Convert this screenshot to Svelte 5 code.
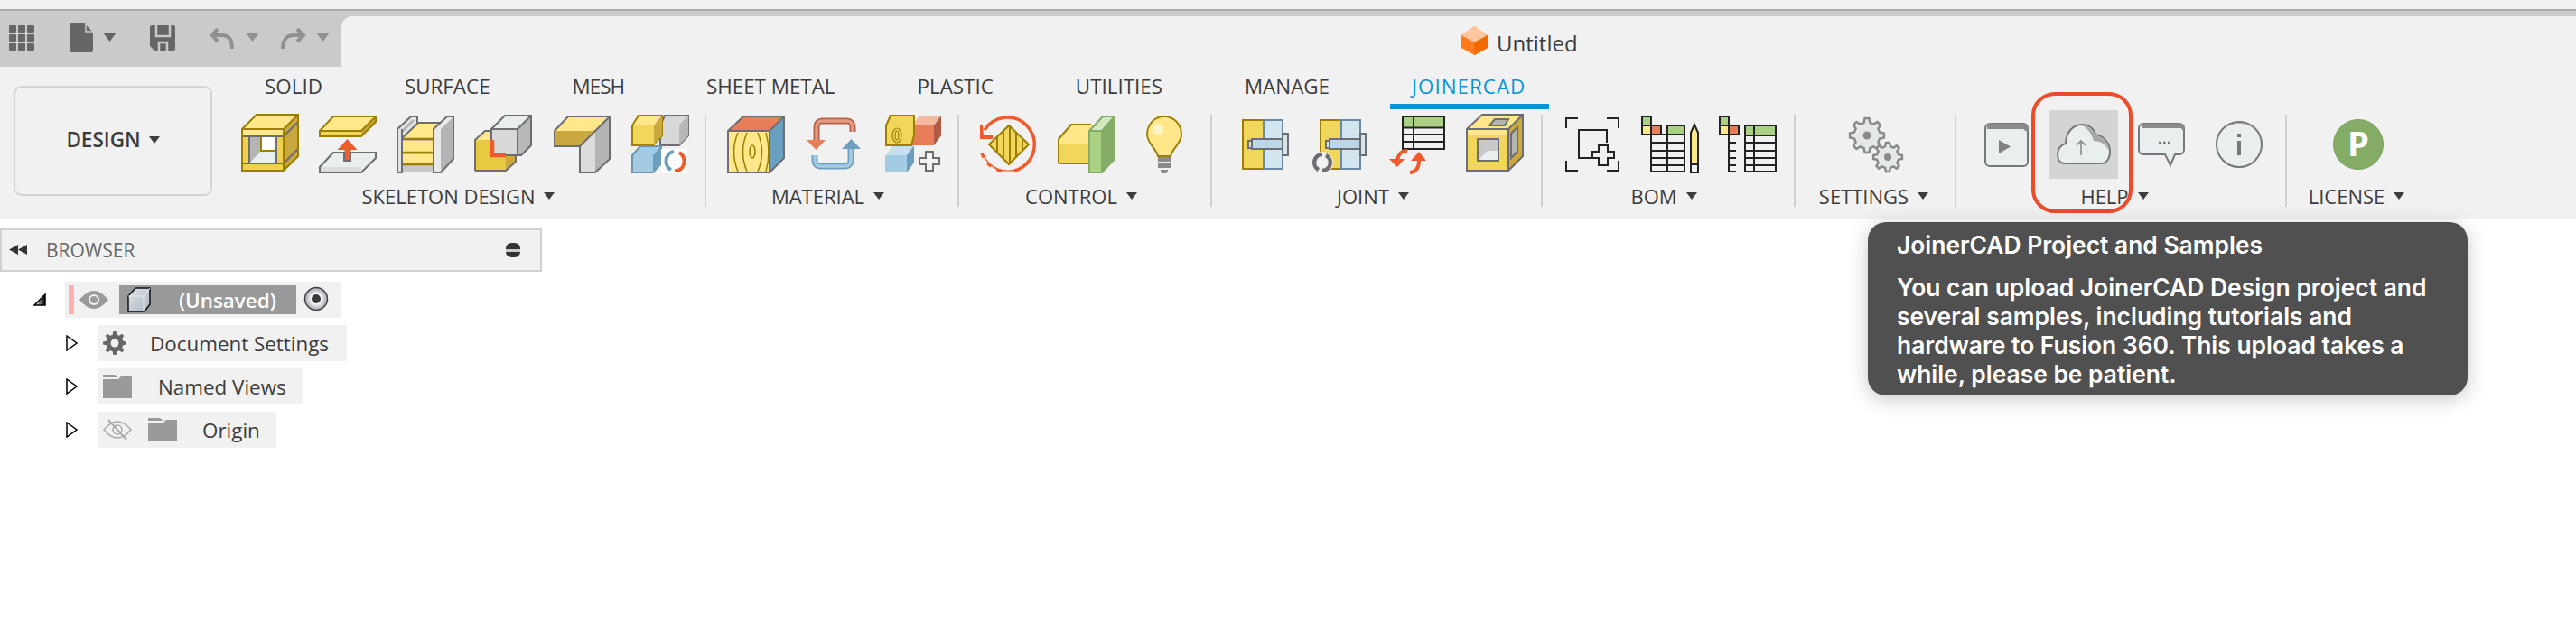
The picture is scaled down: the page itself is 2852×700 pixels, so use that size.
<script>
  const tabs = ['SOLID','SURFACE','MESH','SHEET METAL','PLASTIC','UTILITIES','MANAGE','JOINERCAD'];
  function gear(cx, cy, r, teeth = 8, inner = 0.76) {
    const pts = [];
    for (let i = 0; i < teeth; i++) {
      const a = (i / teeth) * Math.PI * 2;
      const w = Math.PI / teeth;
      [[-0.62, inner], [-0.32, 1], [0.32, 1], [0.62, inner]].forEach(([o, k]) => {
        pts.push((cx + Math.cos(a + o * w) * r * k).toFixed(1) + ',' + (cy + Math.sin(a + o * w) * r * k).toFixed(1));
      });
    }
    return pts.join(' ');
  }
</script>

<div class="page">
  <div class="topline"></div>
  <div class="strip"></div>
  <div class="head">
    <div class="qat">
      <svg width="378" height="56" viewBox="0 18 378 56">
        <g fill="#666">
          {#each [0,1,2] as r}{#each [0,1,2] as c}
            <rect x={10 + c*10} y={28 + r*10} width="8" height="8" rx="1"/>
          {/each}{/each}
          <path d="M79 26h15l9 10v20a2 2 0 0 1-2 2H79a2 2 0 0 1-2-2V28a2 2 0 0 1 2-2z"/>
          <path d="M114 36h15l-7.500 10z"/>
          <path d="M168 28h24a2 2 0 0 1 2 2v24a2 2 0 0 1-2 2h-21l-5-5V30a2 2 0 0 1 2-2z"/>
        </g>
        <path d="M95 26v9h8" fill="none" stroke="#cacaca" stroke-width="1.500"/>
        <path d="M173 28v12h15V28M176 56v-9h9v9" fill="none" stroke="#cacaca" stroke-width="2.500"/>
        <g fill="none" stroke="#909090" stroke-width="4">
          <path d="M241 32l-6 7 6 7"/><path d="M235 39h11c7 0 11 5 11 15"/>
          <path d="M329 32l7 7-7 7"/><path d="M335 39h-10c-7 0-12 5-12 15"/>
        </g>
        <path d="M272 36h15l-7.500 10zM350 36h15l-7.500 10z" fill="#909090"/>
      </svg>
    </div>
    <div class="title">
      <svg width="30" height="34" viewBox="1618 31 30 34">
        <path d="M1632.500 32l14.500 10v14l-14.500 8-14.500-8V42z" fill="#ff7a1a"/>
        <path d="M1632.500 32l14.500 10-14.500 8-14.500-8z" fill="#ffc7a1"/>
        <path d="M1632.500 50l14.500-8v14l-14.500 8z" fill="#f26a00"/>
      </svg>
      <span>Untitled</span>
    </div>
  </div>

  <div class="ribbon">
    <div class="design"><span>DESIGN</span><i class="caret"></i></div>
    <div class="main">
      <div class="tabs">
        {#each tabs as t, i}
          <div class="tab" class:active={i === tabs.length - 1} class:narrow={t === 'MESH'}>{t}</div>
        {/each}
      </div>
      <div class="panels">
        <section class="panel p1">
          <div class="icons">
            <svg width="64" height="76" viewBox="266 122 64 76">
              <path d="M267 143l16-16h46l-16 16z" fill="#ffe78a"/>
              <path d="M313 143l16-16v46l-16 16z" fill="#c9a83e"/>
              <rect x="267" y="143" width="46" height="46" fill="#efd14e"/>
              <rect x="267" y="143" width="46" height="8" fill="#ffe78a"/>
              <rect x="275" y="151" width="30" height="30" fill="#e9eeef"/>
              <path d="M275 151h13v16l-13 14z" fill="#b4b4b4"/>
              <rect x="288" y="151" width="17" height="16" fill="#fff" stroke="#9c7f00" stroke-width="2"/>
              <path d="M267 151h46M267 181h46M275 151v30M305 151v30M313 151l16-16M313 181l16-16" stroke="#6e6e72" stroke-width="2" fill="none"/>
              <path d="M267 143l16-16h46v46l-16 16H267zM267 143h46v46M313 143l16-16" fill="none" stroke="#9c7f00" stroke-width="2"/>
            </svg>
            <svg width="64" height="76" viewBox="352 122 64 76">
              <path d="M353 145l15-16h47l-16 16z" fill="#ffe78a"/>
              <path d="M353 145h46v6h-46z" fill="#f0d75c"/>
              <path d="M399 151v-6l16-16v6z" fill="#c9a83e"/>
              <path d="M353 151v-6l15-16h47v6l-16 16zM353 145h46l16-16" fill="none" stroke="#9c7f00" stroke-width="2"/>
              <path d="M383.500 154l11 12h-7v12h-7v-12h-8z" fill="#f15a2b"/>
              <path d="M353 191v-6l15-16h12v9h7v-9h28v6l-16 16z" fill="#e9eeef" stroke="#6e6e72" stroke-width="2"/>
              <path d="M354 185h45v5h-45z" fill="#dcdcdc"/>
            </svg>
            <svg width="64" height="76" viewBox="438 122 64 76">
              <path d="M444 143h36v48h-36z" fill="#c8c8c8"/>
              <path d="M461 136h33v8h-33z" fill="#f1f1f1"/>
              <path d="M444 153l17-16h30l-12 16z" fill="#ffe78a"/>
              <rect x="444" y="156" width="35" height="12" fill="#ffe78a"/>
              <rect x="444" y="171" width="35" height="10" fill="#ffe78a"/>
              <path d="M444 154h35M444 169h35M444 182h35" stroke="#9c7f00" stroke-width="2.500"/>
              <path d="M461 136h32" stroke="#6e6e72" stroke-width="2"/>
              <path d="M439 143l15-14h7v8l-17 16v38h-5z" fill="#e4e4e4" stroke="#6e6e72" stroke-width="2"/>
              <path d="M444 146l13-13" stroke="#b4b4b4" stroke-width="3"/>
              <path d="M444 143v48" stroke="#6e6e72" stroke-width="2"/>
              <path d="M487 143l14-14v47l-14 15z" fill="#b4b4b4"/>
              <path d="M479 143l15-14h7l-14 14z" fill="#e9e9e9"/>
              <rect x="479" y="143" width="8" height="48" fill="#e9e9e9"/>
              <path d="M479 191v-48l15-14h7v47l-14 15z" fill="none" stroke="#6e6e72" stroke-width="2"/>
            </svg>
            <svg width="66" height="76" viewBox="524 122 66 76">
              <path d="M559 155l11-10v34l-11 10z" fill="#c9a83e"/>
              <path d="M525 155l11-10h34l-11 10z" fill="#ffe78a"/>
              <rect x="525" y="155" width="34" height="34" fill="#e8ca42"/>
              <path d="M525 189v-34l11-10h8M525 189h34l11-10v-6" fill="none" stroke="#6e6e72" stroke-width="2"/>
              <path d="M543 143l15-15h29v33l-11 11h-33z" fill="#d8d8d8"/>
              <path d="M543 143l15-15h29l-15 15z" fill="#e9eeef"/>
              <path d="M572 143l15-15v33l-11 11h-4z" fill="#b8b8b8"/>
              <path d="M543 172v-29l15-15h29v33l-11 11zM543 143h29v29M572 143l15-15" fill="none" stroke="#6e6e72" stroke-width="2"/>
              <path d="M544 155v17h15" fill="none" stroke="#f15a2b" stroke-width="4.500"/>
            </svg>
            <svg width="64" height="76" viewBox="612 122 64 76">
              <path d="M613 145l15-16h46l-16 16z" fill="#ffe78a"/>
              <path d="M613 145h45l-17 17h-28z" fill="#c9a83e"/>
              <path d="M641 162l17-17v46h-17z" fill="#dcdcdc"/>
              <path d="M658 145l16-16v47l-16 15z" fill="#b4b4b4"/>
              <path d="M613 162v-17l15-16h46v47l-16 15h-17v-29zM674 129l-33 33" fill="none" stroke="#6e6e72" stroke-width="2"/>
            </svg>
            <svg width="64" height="76" viewBox="698 122 64 76">
              <path d="M730 139l5-11h26v22l-10 11h-21z" fill="#d8d8d8" stroke="#6e6e72" stroke-width="2"/>
              <path d="M751 139l10-11v22l-10 11z" fill="#b8b8b8"/>
              <path d="M699 139l7-11h26v22l-10 11h-23z" fill="#f0d75c" stroke="#9c7f00" stroke-width="2"/>
              <path d="M700 139l7-10h24l-8 10z" fill="#ffe78a"/>
              <path d="M723 139l9-11v22l-9 11z" fill="#c9a83e"/>
              <path d="M699 172l9-10h23v19l-9 10h-23z" fill="#a3cce3" stroke="#6e93ad" stroke-width="2"/>
              <path d="M722 172l9-10v19l-9 10z" fill="#6a9fc0"/>
              <rect x="731" y="165" width="29" height="27" fill="#fff"/>
              <path d="M745 168a9.500 10.500 0 0 0-3 20" fill="none" stroke="#6a9fc0" stroke-width="4"/>
              <path d="M746 189a9.500 10.500 0 0 0 5-20" fill="none" stroke="#f15a2b" stroke-width="4"/>
            </svg>
          </div>
          <div class="label"><span>SKELETON DESIGN</span><i class="caret"></i></div>
        </section>
        <div class="sep"></div>
        <section class="panel p2">
          <div class="icons">
            <svg width="64" height="76" viewBox="804 122 64 76">
              <rect x="805" y="145" width="46" height="46" fill="#ffe78a"/>
              <path d="M805 145l17-16h45l-16 16z" fill="#e87d5a"/>
              <path d="M851 145l16-16v46l-16 16z" fill="#6a9fc0"/>
              <g fill="none" stroke="#9c7f00" stroke-width="1.500">
                <ellipse cx="832" cy="168" rx="3" ry="7"/>
                <path d="M826 147q-9 21 0 43M838 147q9 21 0 43M816 147q-9 21 0 43M847 147q6 21 0 43"/>
              </g>
              <path d="M805 145l17-16h45v46l-16 16H805zM805 145h46v46M851 145l16-16" fill="none" stroke="#6e6e72" stroke-width="2"/>
            </svg>
            <svg width="64" height="76" viewBox="890 122 64 76">
              <path d="M943 146v-6a6 6 0 0 0-6-6h-28a6 6 0 0 0-6 6v16" fill="none" stroke="#b5604a" stroke-width="7"/>
              <path d="M943 146v-6a6 6 0 0 0-6-6h-28a6 6 0 0 0-6 6v16" fill="none" stroke="#e89a80" stroke-width="3.500"/>
              <path d="M892 155h21l-10.500 11z" fill="#e87d5a"/>
              <path d="M901 172v6a6 6 0 0 0 6 6h28a6 6 0 0 0 6-6v-16" fill="none" stroke="#6a9fc0" stroke-width="7"/>
              <path d="M901 172v6a6 6 0 0 0 6 6h28a6 6 0 0 0 6-6v-16" fill="none" stroke="#a3cce3" stroke-width="3.500"/>
              <path d="M931 165h21l-10.500-11z" fill="#6a9fc0"/>
            </svg>
            <svg width="66" height="76" viewBox="976 122 66 76">
              <path d="M980 172l7-11h24l-8 11z" fill="#c5e0ef"/>
              <rect x="979" y="172" width="24" height="19" fill="#a3cce3"/>
              <path d="M1003 172l8-11v19l-8 11z" fill="#6a9fc0"/>
              <path d="M1009 139l8-11h24l-8 11z" fill="#f5b8a0"/>
              <rect x="1009" y="139" width="24" height="22" fill="#e87d5a"/>
              <path d="M1033 139l8-11v22l-8 11z" fill="#b05a45"/>
              <path d="M980 139l5-11h26v22l-3 11h-28z" fill="#f0d75c" stroke="#9c7f00" stroke-width="2"/>
              <g fill="none" stroke="#9c7f00" stroke-width="1.200"><ellipse cx="992" cy="150" rx="2" ry="5"/><ellipse cx="992" cy="150" rx="5" ry="8"/></g>
              <path d="M1024 168h8v7h7v7h-7v7h-8v-7h-7v-7h7z" fill="#f4f4f4" stroke="#6e6e72" stroke-width="2"/>
            </svg>
          </div>
          <div class="label"><span>MATERIAL</span><i class="caret"></i></div>
        </section>
        <div class="sep"></div>
        <section class="panel p3">
          <div class="icons">
            <svg width="64" height="76" viewBox="1084 122 64 76">
              <path d="M1089 144a30 30 0 1 1-3 26" fill="none" stroke="#f15a2b" stroke-width="3.500"/>
              <path d="M1086 176l5 6M1095 186l6 4M1108 192h14" stroke="#f1f1f1" stroke-width="5"/>
              <path d="M1085 138l1 14h12" fill="none" stroke="#f15a2b" stroke-width="4"/>
              <path d="M1116 139l22 21-22 22-22-22z" fill="#f0d75c" stroke="#9c7f00" stroke-width="2"/>
              <path d="M1103 152v16M1110 145v30M1117 140v40M1124 146v28M1131 153v14" stroke="#9c7f00" stroke-width="2"/>
            </svg>
            <svg width="64" height="76" viewBox="1170 122 64 76">
              <path d="M1171 154l14-16h30v16z" fill="#ffe78a"/>
              <rect x="1171" y="154" width="36" height="27" fill="#f0d75c"/>
              <rect x="1171" y="154" width="36" height="6" fill="#ffe78a"/>
              <path d="M1171 181v-27l14-16h22M1171 181h36" fill="none" stroke="#9c7f00" stroke-width="2"/>
              <path d="M1205 145h14v46h-14z" fill="#a9d083"/>
              <path d="M1205 145l15-16h13l-14 16z" fill="#d3e8c0"/>
              <path d="M1219 145l14-16v47l-14 15z" fill="#84ac66"/>
              <path d="M1205 191v-46l15-16h13v47l-14 15zM1205 145h14v46M1219 145l14-16" fill="none" stroke="#84ac66" stroke-width="2"/>
            </svg>
            <svg width="64" height="76" viewBox="1256 122 64 76">
              <path d="M1288 129c-11 0-19 9-19 20 0 10 10 15 12 24h14c2-9 12-14 12-24 0-11-8-20-19-20z" fill="#ffe78a" stroke="#9c7f00" stroke-width="2"/>
              <circle cx="1281" cy="143" r="6" fill="#fff5c9"/>
              <path d="M1281 174h14v5h-14zM1281 181h14v5h-14z" fill="#8a8a8a"/>
              <path d="M1284 188h8v2l-2 2h-4l-2-2z" fill="#8a8a8a"/>
            </svg>
          </div>
          <div class="label"><span>CONTROL</span><i class="caret"></i></div>
        </section>
        <div class="sep"></div>
        <section class="panel p4">
          <div class="icons">
            <svg width="61" height="76" viewBox="1368 122 61 76">
              <rect x="1375" y="133" width="23" height="54" fill="#f0d75c" stroke="#9c7f00" stroke-width="2"/>
              <rect x="1398" y="133" width="21" height="54" fill="#d3e6f0" stroke="#6a8ba3" stroke-width="2"/>
              <rect x="1381" y="156" width="5" height="8" fill="#d3e6f0" stroke="#6e6e72" stroke-width="2"/>
              <rect x="1385" y="154" width="34" height="11" fill="#bcd8e6" stroke="#6e6e72" stroke-width="2"/>
              <rect x="1419" y="148" width="6" height="24" fill="#d3e6f0" stroke="#6e6e72" stroke-width="2"/>
            </svg>
            <svg width="63" height="76" viewBox="1451 122 63 76" class="j2">
              <rect x="1461" y="133" width="23" height="54" fill="#f0d75c" stroke="#9c7f00" stroke-width="2"/>
              <rect x="1484" y="133" width="21" height="54" fill="#d3e6f0" stroke="#6a8ba3" stroke-width="2"/>
              <rect x="1467" y="156" width="5" height="8" fill="#d3e6f0" stroke="#6e6e72" stroke-width="2"/>
              <rect x="1471" y="154" width="34" height="11" fill="#bcd8e6" stroke="#6e6e72" stroke-width="2"/>
              <rect x="1505" y="148" width="6" height="24" fill="#d3e6f0" stroke="#6e6e72" stroke-width="2"/>
              <circle cx="1463" cy="180" r="12" fill="#f1f1f1"/>
              <path d="M1463 171a9 9 0 0 0-4 17M1463 189a9 9 0 0 0 4-17" fill="none" stroke="#6e6e72" stroke-width="4.500"/>
            </svg>
            <svg width="64" height="76" viewBox="1537 122 64 76" class="j3">
              <rect x="1553" y="129" width="46" height="36" fill="#f1f1f1" stroke="#222" stroke-width="2"/>
              <rect x="1554" y="130" width="44" height="11" fill="#a9d083"/>
              <path d="M1553 141.500h46M1553 149h46M1553 157h46M1565 129v36" stroke="#222" stroke-width="2"/>
              <rect x="1537" y="166" width="40" height="28" fill="#f1f1f1"/>
              <path d="M1558 167c-7 0-11 5-11 13M1561 191c6 0 10-5 10-13" fill="none" stroke="#f15a2b" stroke-width="4"/>
              <path d="M1538 176h17l-8 9zM1562 178h17l-8-10z" fill="#f15a2b"/>
            </svg>
            <svg width="64" height="76" viewBox="1622 122 64 76" class="j4">
              <path d="M1623 143l17-16h45l-16 16z" fill="#ffe78a"/>
              <rect x="1623" y="143" width="46" height="46" fill="#f0d75c"/>
              <path d="M1669 143l16-16v46l-16 16z" fill="#c9a83e"/>
              <path d="M1623 143h46v6h-46z" fill="#ffe78a"/>
              <path d="M1648 139l6-7h15l-4 7z" fill="#b4b4b4" stroke="#6e6e72" stroke-width="2"/>
              <rect x="1635" y="154" width="23" height="24" fill="#c8c8c8" stroke="#6e6e72" stroke-width="2"/>
              <path d="M1636 177l10-10h11v10z" fill="#e9eeef"/>
              <path d="M1672 148l7-7v27l-7 7z" fill="#b4b4b4" stroke="#6e6e72" stroke-width="2"/>
              <path d="M1623 143l17-16h45v46l-16 16h-46zM1623 143h46v46M1669 143l16-16" fill="none" stroke="#6e6e72" stroke-width="2"/>
            </svg>
          </div>
          <div class="label"><span>JOINT</span><i class="caret"></i></div>
        </section>
        <div class="sep"></div>
        <section class="panel p5">
          <div class="icons">
            <svg width="64" height="76" viewBox="1730 122 64 76">
              <path d="M1733 142v-11h13M1778 131h13v11M1733 178v11h13M1778 189h13v-11" fill="none" stroke="#222" stroke-width="2"/>
              <path d="M1762 175h-15v-31h31v14" fill="none" stroke="#222" stroke-width="2"/>
              <path d="M1769 161h10v7h7v7h-7v8h-10v-8h-7v-7h7z" fill="#f1f1f1" stroke="#222" stroke-width="2"/>
            </svg>
            <svg width="64" height="76" viewBox="1816 122 64 76">
              <rect x="1817" y="129" width="10" height="10" fill="#a9d083" stroke="#222" stroke-width="2"/>
              <rect x="1817" y="139" width="10" height="10" fill="#ffe78a" stroke="#222" stroke-width="2"/>
              <rect x="1827" y="139" width="11" height="10" fill="#e87d5a" stroke="#222" stroke-width="2"/>
              <rect x="1827" y="149" width="37" height="41" fill="#f1f1f1" stroke="#222" stroke-width="2"/>
              <rect x="1845" y="139" width="19" height="10" fill="#a9d083" stroke="#222" stroke-width="2"/>
              <path d="M1827 158h37M1827 167h37M1827 175h37M1827 183h37M1845 149v41" stroke="#222" stroke-width="2"/>
              <path d="M1871 147l4-9 4 9v44h-8z" fill="#ffe78a" stroke="#222" stroke-width="2"/>
              <path d="M1871 182h8" stroke="#222" stroke-width="2"/>
              <rect x="1872" y="183" width="6" height="7" fill="#f1f1f1"/>
            </svg>
            <svg width="64" height="76" viewBox="1902 122 64 76">
              <rect x="1903" y="129" width="10" height="10" fill="#a9d083" stroke="#222" stroke-width="2"/>
              <rect x="1903" y="139" width="10" height="10" fill="#ffe78a" stroke="#222" stroke-width="2"/>
              <rect x="1913" y="139" width="11" height="10" fill="#e87d5a" stroke="#222" stroke-width="2"/>
              <path d="M1913 149v41M1913 158h8M1913 167h8M1913 175h8M1913 183h8M1913 190h8" stroke="#222" stroke-width="2"/>
              <rect x="1931" y="139" width="34" height="51" fill="#f1f1f1" stroke="#222" stroke-width="2"/>
              <rect x="1932" y="140" width="32" height="10" fill="#a9d083"/>
              <path d="M1931 150h34M1931 158h34M1931 167h34M1931 175h34M1931 183h34M1941 139v51" stroke="#222" stroke-width="2"/>
            </svg>
          </div>
          <div class="label"><span>BOM</span><i class="caret"></i></div>
        </section>
        <div class="sep"></div>
        <section class="panel p6">
          <div class="icons">
            <svg width="64" height="76" viewBox="2044 122 64 76">
              <polygon points={gear(2066, 150, 19)} fill="#e4e8e9" stroke="#8a8a8a" stroke-width="2.500"/>
              <circle cx="2066" cy="150" r="4.500" fill="#8a8a8a"/>
              <polygon points={gear(2089, 174, 16)} fill="#e4e8e9" stroke="#8a8a8a" stroke-width="2.500"/>
              <circle cx="2089" cy="174" r="4" fill="#8a8a8a"/>
            </svg>
          </div>
          <div class="label"><span>SETTINGS</span><i class="caret"></i></div>
        </section>
        <div class="sep"></div>
        <section class="panel p7">
          <div class="icons">
            <svg width="64" height="76" viewBox="2188 122 64 76">
              <rect x="2197" y="137" width="47" height="47" rx="5" fill="#e9eeef" stroke="#77777b" stroke-width="2"/>
              <path d="M2199 137h41l4 4v6l-5-4h-40z" fill="#8a8a8a"/>
              <path d="M2212 155l13 7.500-13 7.500z" fill="#808080"/>
            </svg>
            <svg class="hl" width="76" height="76" viewBox="2268 122 76 76">
              <path d="M2285 181c-5 0-8-4-8-10 0-6 4-11 9-12 0-12 8-21 18-21 8 0 13 5 15 11 8 1 16 9 16 19 0 8-4 13-10 13z" fill="#e9eeef" stroke="#77777b" stroke-width="2"/>
              <path d="M2304 139c7 0 12 5 14 11 8 1 15 8 16 18-3-8-9-12-17-12-2-7-6-14-13-17z" fill="#a6a6a6"/>
              <path d="M2303 172v-16M2298 161l5-5 5 5" fill="none" stroke="#8a8a8a" stroke-width="1.600"/>
            </svg>
            <svg width="70" height="76" viewBox="2360 122 70 76">
              <path d="M2372 137h40a5 5 0 0 1 5 5v24a5 5 0 0 1-5 5h-5l-5 12-6-12h-24a5 5 0 0 1-5-5v-24a5 5 0 0 1 5-5z" fill="#e9eeef" stroke="#77777b" stroke-width="2"/>
              <path d="M2370 137h44l3 5v5l-3-5h-44z" fill="#8a8a8a"/>
              <path d="M2389 158h2.500M2394 158h2.500M2399 158h2.500" stroke="#77777b" stroke-width="2.500"/>
            </svg>
            <svg width="64" height="76" viewBox="2446 122 64 76">
              <circle cx="2478" cy="160" r="25" fill="#e9eeef" stroke="#77777b" stroke-width="2"/>
              <path d="M2461 143a24 24 0 0 1 34 0 26 26 0 0 0-34 0z" fill="#9a9a9a"/>
              <rect x="2476" y="148" width="4" height="4" fill="#77777b"/>
              <rect x="2476" y="156" width="4" height="16" fill="#77777b"/>
            </svg>
          </div>
          <div class="label"><span>HELP</span><i class="caret"></i></div>
        </section>
        <div class="sep"></div>
        <section class="panel p8">
          <div class="icons">
            <svg width="64" height="76" viewBox="2578 122 64 76">
              <circle cx="2610" cy="160" r="27.500" fill="#84ac66" stroke="#78a05c" stroke-width="1"/>
              <text x="2610" y="173" class="ptext" text-anchor="middle">P</text>
            </svg>
          </div>
          <div class="label"><span>LICENSE</span><i class="caret"></i></div>
        </section>
      </div>
    </div>
  </div>

  <div class="browser">
    <div class="bhead">
      <svg width="20" height="12" viewBox="10 272 20 12"><path d="M20 272v11l-10-5.500zM30 272v11l-10-5.500z" fill="#333"/></svg>
      <span>BROWSER</span>
      <svg class="min" width="16" height="16" viewBox="560 269 16 16"><rect x="560" y="269" width="16" height="16" rx="6" fill="#333"/><rect x="560" y="276" width="16" height="3" fill="#ccc"/></svg>
    </div>
    <div class="tree">
      <div class="row r0">
        <svg class="tw" width="14" height="14" viewBox="37 325 14 14">
          <defs><linearGradient id="tg" x1="0" y1="0" x2="1" y2="0"><stop offset="0" stop-color="#fff"/><stop offset="1" stop-color="#000"/></linearGradient></defs>
          <path d="M38 338h12v-12z" fill="url(#tg)" stroke="#000" stroke-width="1.500"/>
        </svg>
        <div class="cell c0">
          <i class="pink"></i>
          <svg class="eye" width="32" height="20" viewBox="88 322 32 20">
            <path d="M88 332c6-7 11-10 16-10s10 3 16 10c-6 7-11 10-16 10s-10-3-16-10z" fill="#9a9a9a"/>
            <circle cx="104" cy="332" r="5" fill="none" stroke="#f1f1f1" stroke-width="2"/>
          </svg>
          <div class="sel">
            <svg width="28" height="28" viewBox="140 316 28 28">
              <defs><linearGradient id="cg" x1="0" y1="0" x2="1" y2="1"><stop offset="0" stop-color="#dfe3ea"/><stop offset="1" stop-color="#aeb5c2"/></linearGradient></defs>
              <path d="M142 326l8-9h16v18l-6 8h-18z" fill="url(#cg)" stroke="#111" stroke-width="1.500"/>
              <path d="M142 326h17v17M159 326l7-9" fill="none" stroke="#e8e8e8" stroke-width="1"/>
            </svg>
            <span>(Unsaved)</span>
          </div>
          <svg class="radio" width="28" height="32" viewBox="336 316 28 32">
            <defs><radialGradient id="rg"><stop offset="0.4" stop-color="#fff"/><stop offset="1" stop-color="#9fa3ad"/></radialGradient></defs>
            <circle cx="350" cy="331" r="12.500" fill="url(#rg)" stroke="#444" stroke-width="1.500"/>
            <circle cx="350" cy="331" r="5" fill="#3a3a3a"/>
          </svg>
        </div>
      </div>
      <div class="row">
        <svg class="tw2" width="14" height="18" viewBox="73 372 14 18"><path d="M74 373l11 8-11 8z" fill="#fff" stroke="#000" stroke-width="1.500"/></svg>
        <div class="cell c1">
          <svg width="26" height="26" viewBox="114 367 26 26">
            <polygon points={gear(127, 380, 13, 8, 0.74)} fill="#666"/>
            <circle cx="127" cy="380" r="4.500" fill="#f1f1f1"/>
          </svg>
          <span>Document Settings</span>
        </div>
      </div>
      <div class="row">
        <svg class="tw2" width="14" height="18" viewBox="73 372 14 18"><path d="M74 373l11 8-11 8z" fill="#fff" stroke="#000" stroke-width="1.500"/></svg>
        <div class="cell c2">
          <svg width="32" height="26" viewBox="0 0 32 26"><path d="M0 0h13l4 3h-17zM0 5h17l3-3h12v24H0z" fill="#999"/></svg>
          <span>Named Views</span>
        </div>
      </div>
      <div class="row">
        <svg class="tw2" width="14" height="18" viewBox="73 372 14 18"><path d="M74 373l11 8-11 8z" fill="#fff" stroke="#000" stroke-width="1.500"/></svg>
        <div class="cell c3">
          <svg width="32" height="24" viewBox="0 0 32 24">
            <path d="M1 12c5-6 10-9 15-9s10 3 15 9c-5 6-10 9-15 9S6 18 1 12z" fill="none" stroke="#aaa" stroke-width="1.500"/>
            <circle cx="16" cy="12" r="5" fill="none" stroke="#aaa" stroke-width="1.500"/>
            <path d="M6 1l20 22" stroke="#aaa" stroke-width="2"/>
          </svg>
          <svg class="f2" width="32" height="26" viewBox="0 0 32 26"><path d="M0 0h13l4 3h-17zM0 5h17l3-3h12v24H0z" fill="#999"/></svg>
          <span>Origin</span>
        </div>
      </div>
    </div>
  </div>

  <div class="ring"></div>
  <div class="tip">
    <h4>JoinerCAD Project and Samples</h4>
    <p>You can upload JoinerCAD Design project and several samples, including tutorials and hardware to Fusion 360. This upload takes a while, please be patient.</p>
  </div>
</div>

<style>
  :global(body) { margin: 0; background: #fff; overflow: hidden; }
  .page {
    position: relative;
    width: 2852px;
    height: 700px;
    overflow: hidden;
    font-family: "Open Sans", "Liberation Sans", sans-serif;
    color: #3c3c3c;
  }
  svg { display: block; flex: none; }
  .topline { height: 10px; background: #f1f1f1; border-bottom: 2px solid #a9a9a9; }
  .strip { height: 6px; background: #cacaca; }
  .head { display: flex; height: 56px; background: #cacaca; }
  .qat { width: 378px; flex: none; }
  .title {
    flex: 1;
    display: flex;
    align-items: center;
    gap: 9px;
    padding-left: 1240px;
    background: #f1f1f1;
    border-top-left-radius: 12px;
    font-size: 24px;
    color: #3c3c3c;
  }
  .title svg { margin-top: -2px; }
  .title span { margin-top: 2px; }
  .ribbon { display: flex; height: 169px; background: #f1f1f1; }
  .design {
    flex: none;
    box-sizing: border-box;
    width: 220px;
    height: 122px;
    margin: 21px 0 0 15px;
    border: 2px solid #d4d4d4;
    border-radius: 9px;
    display: flex;
    align-items: center;
    justify-content: center;
    gap: 9px;
    padding-bottom: 3px;
    font-size: 22.500px;
    font-weight: 600;
  }
  .caret {
    display: block;
    flex: none;
    width: 0;
    height: 0;
    border-left: 6px solid transparent;
    border-right: 6px solid transparent;
    border-top: 8px solid #3c3c3c;
  }
  .main { flex: 1; min-width: 0; }
  .tabs { display: flex; gap: 43px; padding-left: 34px; height: 48px; }
  .tab {
    box-sizing: border-box;
    height: 47px;
    padding: 3px 24px 0;
    border-bottom: 6px solid transparent;
    font-size: 22.400px;
    line-height: 38px;
    white-space: nowrap;
  }
  .tab.narrow { letter-spacing: -1px; }
  .tab.active { color: #0696d7; border-bottom-color: #0696d7; letter-spacing: 1px; font-weight: 500; padding: 3px 26px 0 24px; }
  .panels { display: flex; height: 108px; }
  .panel { display: flex; flex-direction: column; flex: none; box-sizing: border-box; }
  .sep { flex: none; width: 2px; height: 102px; margin-top: 5px; background: #d0d0d0; }
  .icons { display: flex; height: 76px; gap: 22px; }
  .label {
    display: flex;
    align-items: center;
    justify-content: center;
    gap: 10px;
    height: 38px;
    box-sizing: border-box;
    padding-top: 4px;
    font-size: 22px;
    white-space: nowrap;
  }
  .p1 { width: 545px; }
  .p1 .icons { padding-left: 32px; }
  .p2 { width: 278px; }
  .p2 .icons { padding-left: 23px; }
  .p2 .label { padding-right: 9px; }
  .p3 { width: 278px; }
  .p3 .icons { padding-left: 23px; }
  .p3 .label { padding-right: 8px; }
  .p4 { width: 364px; }
  .p4 .icons { padding-left: 27px; }
  .p4 .label { padding-right: 8px; }
  .p5 { width: 278px; }
  .p5 .icons { padding-left: 23px; }
  .p5 .label { padding-right: 10px; }
  .p6 { width: 176px; }
  .p6 .icons { padding-left: 57px; }
  .p6 .label { padding-right: 3px; }
  .p7 { width: 364px; }
  .p7 .icons { padding-left: 23px; gap: 16px; }
  .p7 .label { padding-right: 14px; }
  .hl { background: #d4d4d4; }
  .p8 { width: 154px; }
  .p8 .icons { padding-left: 47px; }
  .ptext { font: 700 38px "Open Sans", sans-serif; fill: #fff; }

  .browser { margin-top: 10px; }
  .bhead {
    box-sizing: border-box;
    width: 600px;
    height: 48px;
    border: 2px solid #d0d0d0;
    background: #f1f1f1;
    display: flex;
    align-items: center;
    padding-left: 8px;
    font-size: 21px;
    color: #666;
  }
  .bhead span { margin-left: 21px; }
  .min { margin-left: auto; margin-right: 22px; }
  .tree { margin-top: 11px; display: flex; flex-direction: column; gap: 8px; padding-left: 74px; font-size: 22.400px; }
  .row { display: flex; align-items: center; height: 40px; }
  .r0 { margin-left: -37px; }
  .tw { margin-right: 21px; }
  .tw2 { margin-left: -1px; margin-right: 21px; }
  .cell { height: 40px; display: flex; align-items: center; background: #f1f1f1; box-sizing: border-box; white-space: nowrap; }
  .c0 { width: 306px; padding-left: 4px; }
  .pink { width: 6px; height: 32px; background: #ffb0b0; display: block; flex: none; }
  .eye { margin-left: 6px; }
  .sel {
    display: flex;
    align-items: center;
    margin-left: 12px;
    width: 196px;
    height: 32px;
    padding-left: 8px;
    box-sizing: border-box;
    background: #999;
    color: #fff;
    font-weight: 600;
  }
  .sel span { margin-left: 30px; }
  .radio { margin-left: 8px; }
  .c1 { width: 276px; padding-left: 6px; }
  .c1 span { margin-left: 26px; }
  .c2 { width: 228px; padding-left: 6px; }
  .c2 span { margin-left: 29px; }
  .c3 { width: 198px; padding-left: 6px; }
  .f2 { margin-left: 18px; }
  .c3 span { margin-left: 28px; }

  .ring {
    position: absolute;
    left: 2249px;
    top: 102px;
    width: 112px;
    height: 134px;
    box-sizing: border-box;
    border: 4px solid #ee4b2b;
    border-radius: 26px;
  }
  .tip {
    position: absolute;
    left: 2068px;
    top: 246px;
    width: 664px;
    height: 192px;
    box-sizing: border-box;
    padding: 9px 42px 0 32px;
    background: #505050;
    border-radius: 20px;
    box-shadow: 0 4px 22px rgba(0, 0, 0, .22);
    color: #fff;
    font-family: Inter, "Open Sans", sans-serif;
    font-size: 26.400px;
    font-weight: 600;
    line-height: 32px;
  }
  .tip h4 { margin: 0; font: inherit; }
  .tip p { margin: 15px 0 0; }
</style>
